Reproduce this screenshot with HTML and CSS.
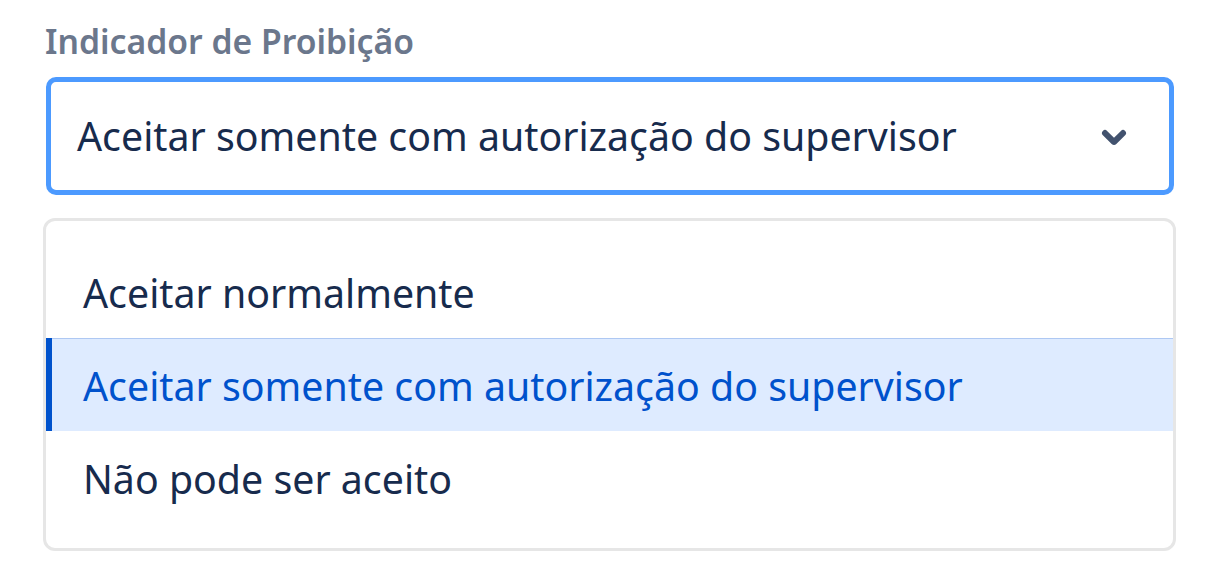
FILE: index.html
```html
<!DOCTYPE html>
<html lang="pt-BR">
<head>
<meta charset="utf-8">
<title>Indicador de Proibição</title>
<link rel="stylesheet" href="styles.css">
</head>
<body>
<div class="field">
  <label class="field-label">Indicador de Proibição</label>
  <div class="select">
    <span class="select-value">Aceitar somente com autorização do supervisor</span>
    <svg class="chevron" width="72" height="72" viewBox="0 0 24 24" aria-hidden="true">
      <path d="M8.292 10.293a1.009 1.009 0 0 0 0 1.419l2.939 2.965c.218.215.5.322.779.322s.556-.107.769-.322l2.93-2.955a1.01 1.01 0 0 0 0-1.419.987.987 0 0 0-1.406 0l-2.298 2.317-2.307-2.327a.99.99 0 0 0-1.406 0z" fill="currentColor"/>
    </svg>
  </div>
  <ul class="menu">
    <li class="option">Aceitar normalmente</li>
    <li class="option option-selected">Aceitar somente com autorização do supervisor</li>
    <li class="option">Não pode ser aceito</li>
  </ul>
</div>
</body>
</html>
```
FILE: styles.css
```css
html, body {
  margin: 0;
  padding: 0;
  background: #ffffff;
}

body {
  font-family: "Noto Sans", "Open Sans", sans-serif;
  color: #172B4D;
}

.field {
  width: 1128px;
  padding: 21px 0 0 46px;
}

.field-label {
  display: block;
  font-size: 33.7px;
  font-weight: 600;
  line-height: 40px;
  color: #6B778C;
  margin-left: -1px;
}

.select {
  box-sizing: border-box;
  margin-top: 16px;
  height: 118px;
  border: 5px solid #4C9AFF;
  border-radius: 10px;
  display: flex;
  align-items: center;
  padding: 0 19px 0 26px;
  background: #ffffff;
}

.select-value {
  flex: 1;
  font-size: 39.3px;
  color: #172B4D;
  white-space: nowrap;
}

.chevron {
  display: block;
  flex: none;
  color: #42526E;
}

.menu {
  list-style: none;
  box-sizing: border-box;
  margin: 23px 0 0 -3px;
  width: 1133px;
  padding: 24px 0;
  border: 3px solid #E6E6E6;
  border-radius: 12px;
  background: #ffffff;
}

.option {
  font-size: 39.3px;
  line-height: 54px;
  padding: 21px 0 18px 37px;
  color: #172B4D;
  white-space: nowrap;
}

.option-selected {
  background: #DEEBFF;
  color: #0052CC;
  box-shadow: inset 6px 0 0 #0052CC, inset 0 1px 0 #AEC8F3;
}
```
